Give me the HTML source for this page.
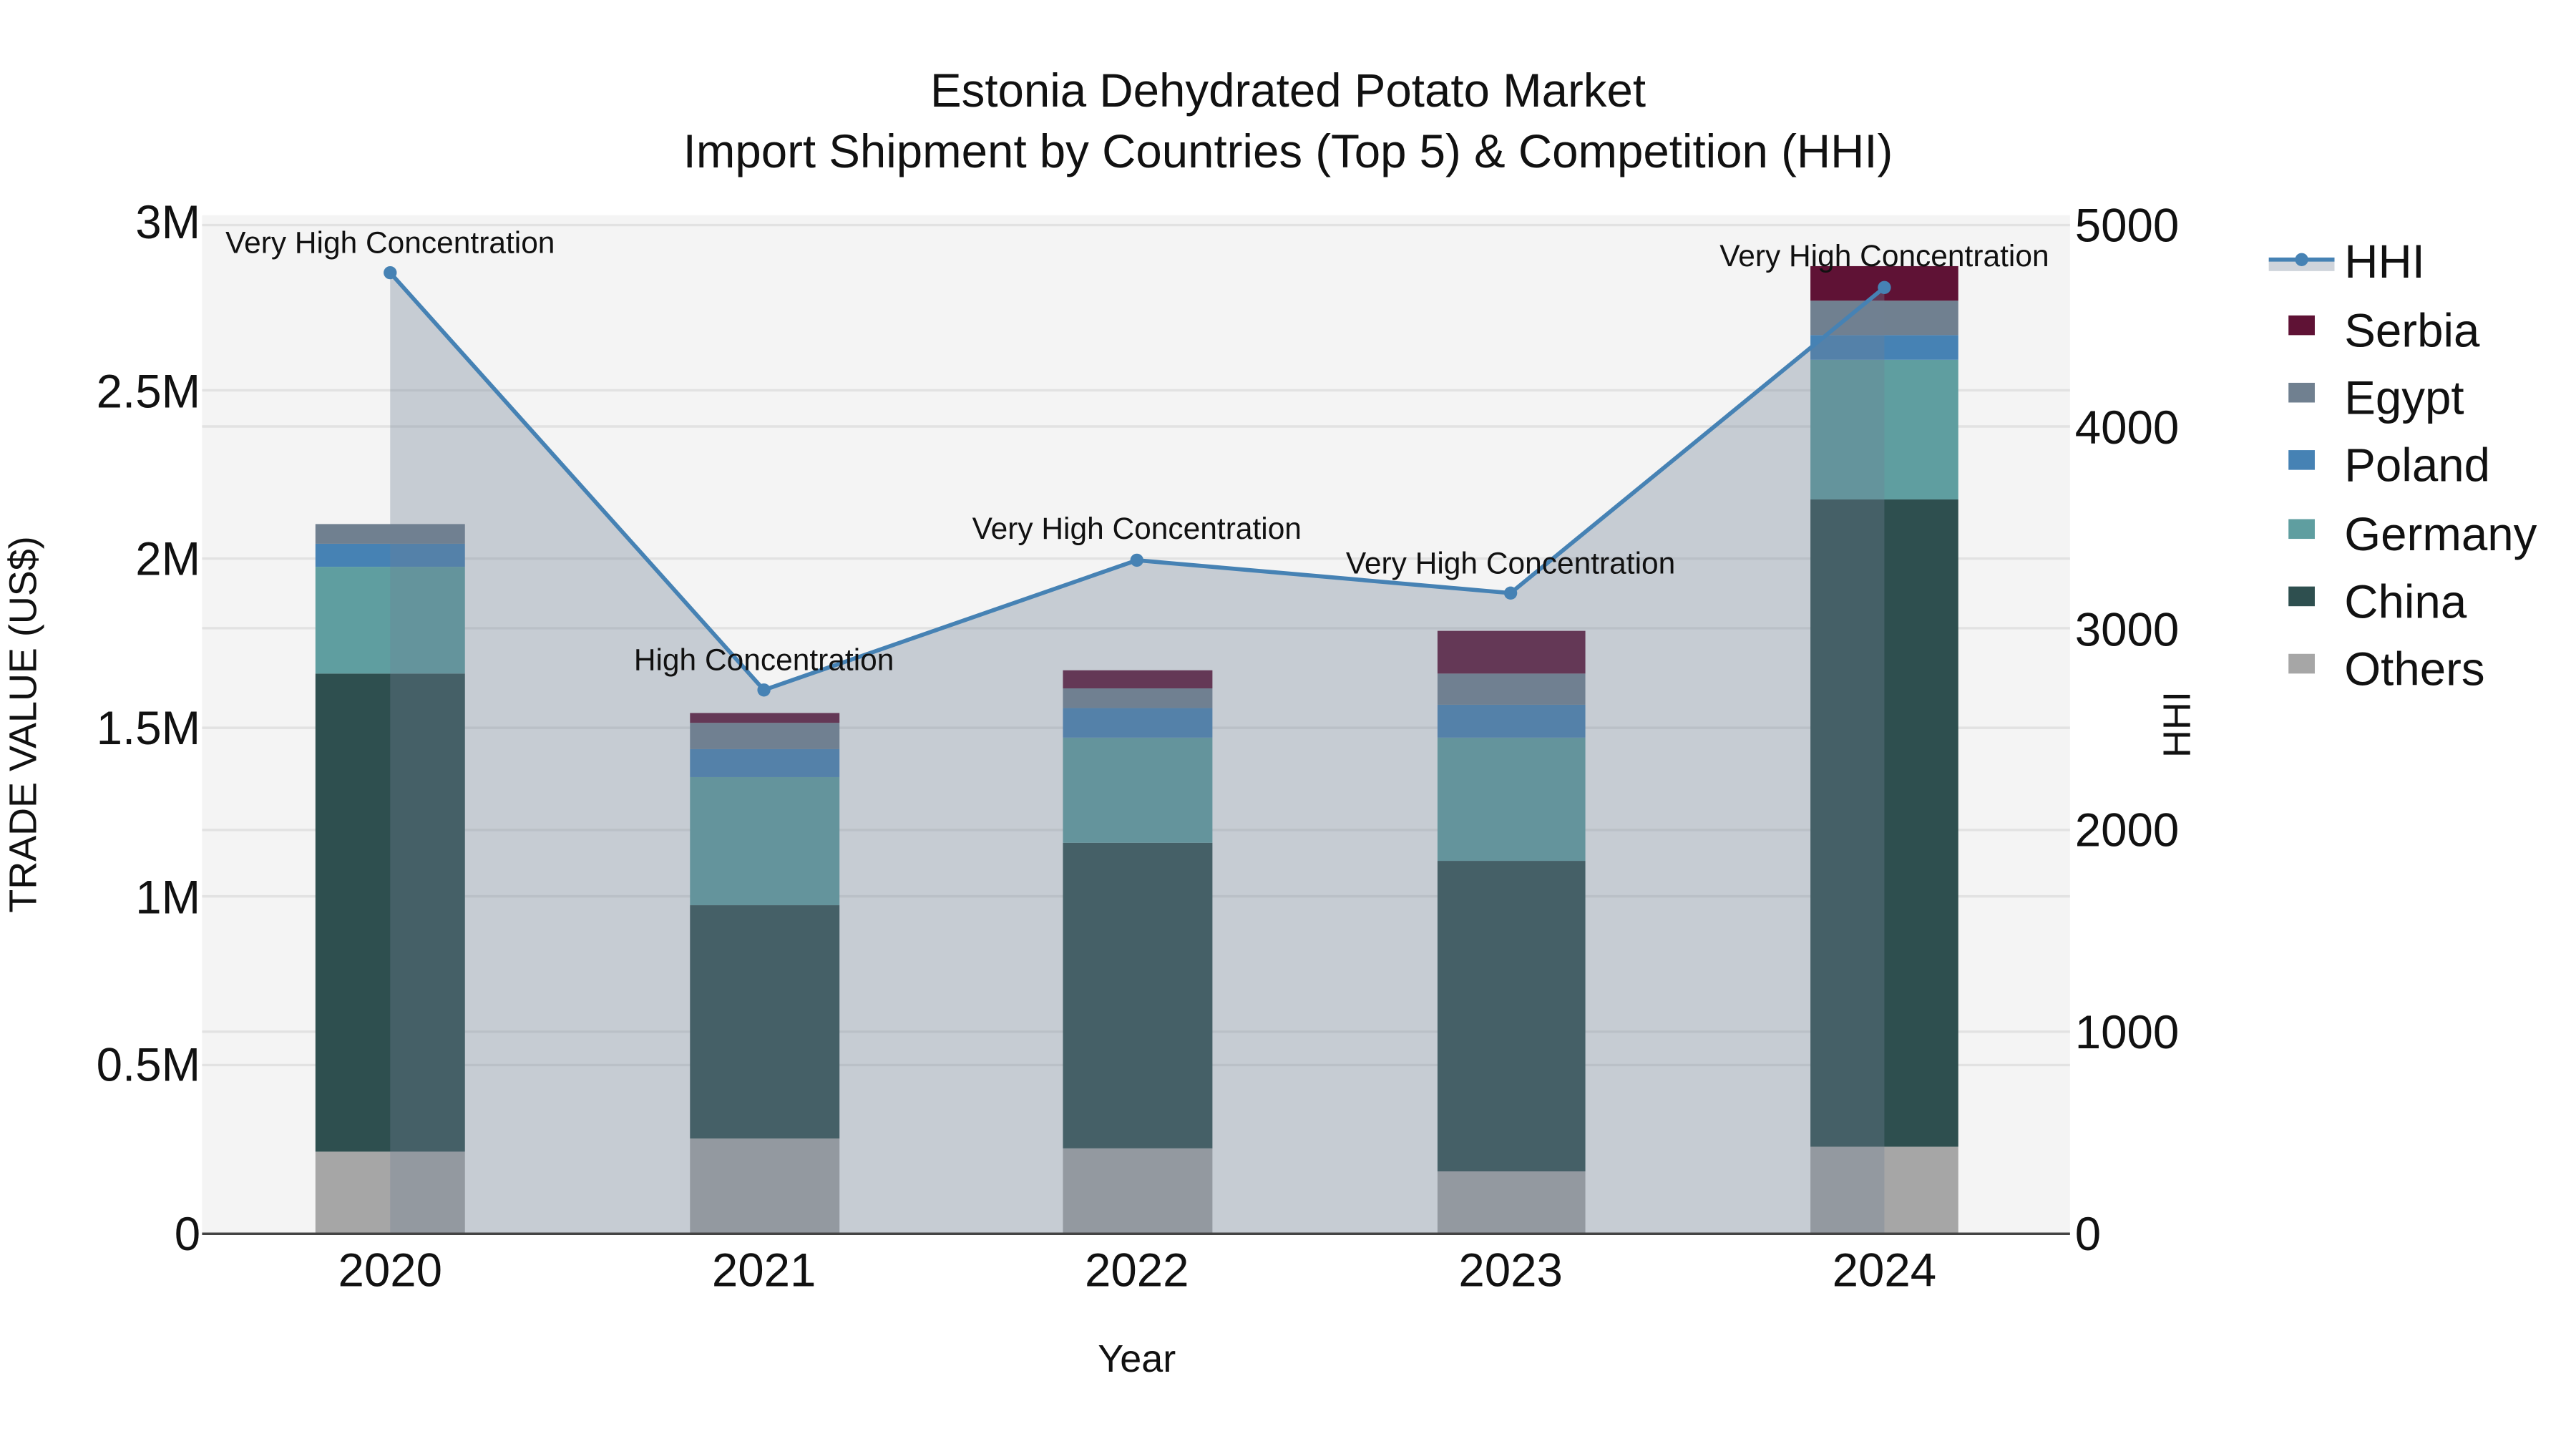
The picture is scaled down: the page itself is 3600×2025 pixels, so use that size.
<!DOCTYPE html>
<html><head><meta charset="utf-8"><style>
html,body{margin:0;padding:0;background:#fff;width:3600px;height:2025px;overflow:hidden}
svg{display:block}
text{font-family:"Liberation Sans",Arial,sans-serif;fill:#111}
</style></head><body>
<svg width="3600" height="2025" viewBox="0 0 1568 882" preserveAspectRatio="none" xmlns="http://www.w3.org/2000/svg">
<rect x="0" y="0" width="1568" height="882" fill="#fff"/>
<rect x="123" y="131" width="1137" height="620" fill="#f4f4f4"/>
<g stroke="#e2e2e2" stroke-width="1.5">
<line x1="123" x2="1260" y1="137" y2="137"/>
<line x1="123" x2="1260" y1="237.6" y2="237.6"/>
<line x1="123" x2="1260" y1="340" y2="340"/>
<line x1="123" x2="1260" y1="443" y2="443"/>
<line x1="123" x2="1260" y1="545.6" y2="545.6"/>
<line x1="123" x2="1260" y1="648.3" y2="648.3"/>
<line x1="123" x2="1260" y1="259.6" y2="259.6"/>
<line x1="123" x2="1260" y1="382.4" y2="382.4"/>
<line x1="123" x2="1260" y1="505.2" y2="505.2"/>
<line x1="123" x2="1260" y1="628" y2="628"/>
</g>
<g>
<rect x="192" y="701" width="91" height="50" fill="#a6a6a6"/>
<rect x="192" y="410" width="91" height="291" fill="#2e4f4f"/>
<rect x="192" y="345" width="91" height="65" fill="#5f9ea0"/>
<rect x="192" y="331" width="91" height="14" fill="#4682b4"/>
<rect x="192" y="319" width="91" height="12" fill="#708090"/>
<rect x="420" y="693" width="91" height="58" fill="#a6a6a6"/>
<rect x="420" y="551" width="91" height="142" fill="#2e4f4f"/>
<rect x="420" y="473" width="91" height="78" fill="#5f9ea0"/>
<rect x="420" y="456" width="91" height="17" fill="#4682b4"/>
<rect x="420" y="440" width="91" height="16" fill="#708090"/>
<rect x="420" y="434" width="91" height="6" fill="#5f1235"/>
<rect x="647" y="699" width="91" height="52" fill="#a6a6a6"/>
<rect x="647" y="513" width="91" height="186" fill="#2e4f4f"/>
<rect x="647" y="449" width="91" height="64" fill="#5f9ea0"/>
<rect x="647" y="431" width="91" height="18" fill="#4682b4"/>
<rect x="647" y="419" width="91" height="12" fill="#708090"/>
<rect x="647" y="408" width="91" height="11" fill="#5f1235"/>
<rect x="875" y="713" width="90" height="38" fill="#a6a6a6"/>
<rect x="875" y="524" width="90" height="189" fill="#2e4f4f"/>
<rect x="875" y="449" width="90" height="75" fill="#5f9ea0"/>
<rect x="875" y="429" width="90" height="20" fill="#4682b4"/>
<rect x="875" y="410" width="90" height="19" fill="#708090"/>
<rect x="875" y="384" width="90" height="26" fill="#5f1235"/>
<rect x="1102" y="698" width="90" height="53" fill="#a6a6a6"/>
<rect x="1102" y="304" width="90" height="394" fill="#2e4f4f"/>
<rect x="1102" y="219" width="90" height="85" fill="#5f9ea0"/>
<rect x="1102" y="204" width="90" height="15" fill="#4682b4"/>
<rect x="1102" y="183" width="90" height="21" fill="#708090"/>
<rect x="1102" y="162" width="90" height="21" fill="#5f1235"/>
</g>
<polygon points="237.5,166 465,420 692,341 919.5,361 1147,175 1147,751 237.5,751" fill="rgba(112,128,148,0.35)"/>
<polyline points="237.5,166 465,420 692,341 919.5,361 1147,175" fill="none" stroke="#4682b4" stroke-width="2.5"/>
<g fill="#4682b4">
<circle cx="237.5" cy="166" r="4"/><circle cx="465" cy="420" r="4"/><circle cx="692" cy="341" r="4"/><circle cx="919.5" cy="361" r="4"/><circle cx="1147" cy="175" r="4"/>
</g>
<g font-size="18.5" text-anchor="middle">
<text x="237.5" y="154">Very High Concentration</text>
<text x="465" y="408">High Concentration</text>
<text x="692" y="328">Very High Concentration</text>
<text x="919.5" y="349">Very High Concentration</text>
<text x="1147" y="162">Very High Concentration</text>
</g>
<line x1="123" x2="1260" y1="751" y2="751" stroke="#444" stroke-width="1.5"/>
<g font-size="28.5" text-anchor="end">
<text x="122" y="145">3M</text>
<text x="122" y="248">2.5M</text>
<text x="122" y="350">2M</text>
<text x="122" y="453">1.5M</text>
<text x="122" y="556">1M</text>
<text x="122" y="658">0.5M</text>
<text x="122" y="761">0</text>
</g>
<g font-size="28.5" text-anchor="start">
<text x="1263" y="147">5000</text>
<text x="1263" y="270">4000</text>
<text x="1263" y="393">3000</text>
<text x="1263" y="515">2000</text>
<text x="1263" y="638">1000</text>
<text x="1263" y="761">0</text>
</g>
<g font-size="28.5" text-anchor="middle">
<text x="237.5" y="783">2020</text>
<text x="465" y="783">2021</text>
<text x="692" y="783">2022</text>
<text x="919.5" y="783">2023</text>
<text x="1147" y="783">2024</text>
</g>
<text x="692" y="835" font-size="23.5" text-anchor="middle">Year</text>
<text transform="translate(22,441) rotate(-90)" font-size="23.5" text-anchor="middle">TRADE VALUE (US$)</text>
<text transform="translate(1333,441) rotate(-90)" font-size="23.5" text-anchor="middle">HHI</text>
<g font-size="28.5" text-anchor="middle">
<text x="784" y="65">Estonia Dehydrated Potato Market</text>
<text x="784" y="102">Import Shipment by Countries (Top 5) &amp; Competition (HHI)</text>
</g>
<rect x="1381" y="158" width="40" height="7" fill="#cfd4db"/>
<line x1="1381" x2="1421" y1="158" y2="158" stroke="#4682b4" stroke-width="2.5"/>
<circle cx="1401" cy="158" r="4" fill="#4682b4"/>
<g>
<rect x="1393" y="192" width="16" height="12" fill="#5f1235"/>
<rect x="1393" y="233" width="16" height="12" fill="#708090"/>
<rect x="1393" y="274" width="16" height="12" fill="#4682b4"/>
<rect x="1393" y="316" width="16" height="12" fill="#5f9ea0"/>
<rect x="1393" y="357" width="16" height="12" fill="#2e4f4f"/>
<rect x="1393" y="398" width="16" height="12" fill="#a6a6a6"/>
</g>
<g font-size="28.5">
<text x="1427" y="169">HHI</text>
<text x="1427" y="211">Serbia</text>
<text x="1427" y="252">Egypt</text>
<text x="1427" y="293">Poland</text>
<text x="1427" y="335">Germany</text>
<text x="1427" y="376">China</text>
<text x="1427" y="417">Others</text>
</g>
</svg>
</body></html>
